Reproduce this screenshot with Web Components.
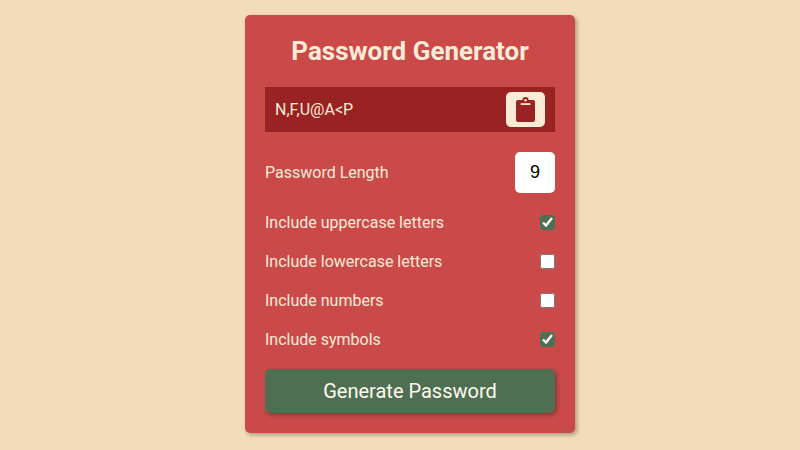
<!DOCTYPE html>
<html lang="en">
<head>
<meta charset="utf-8">
<title>Password Generator</title>
<style>
html,body{height:100%}
body{margin:0;background:#f2dcba;font-family:Roboto,"Liberation Sans",sans-serif;font-size:16px;color:#faebd7;display:flex;justify-content:center;align-items:flex-start;box-sizing:border-box;padding:15px 0 0 20px;overflow:hidden}
</style>
</head>
<body>
<password-card>
  <span slot="title">Password Generator</span>
  <password-result value="N,F,U@A&lt;P"></password-result>
  <length-field value="9">Password Length</length-field>
  <option-list>
    <option-row checked>Include uppercase letters</option-row>
    <option-row>Include lowercase letters</option-row>
    <option-row>Include numbers</option-row>
    <option-row checked>Include symbols</option-row>
  </option-list>
  <generate-button>Generate Password</generate-button>
</password-card>
<script>
function define(name, html, setup) {
  customElements.define(name, class extends HTMLElement {
    constructor() {
      super();
      const t = document.createElement('template');
      t.innerHTML = html;
      this.attachShadow({mode: 'open'}).append(t.content.cloneNode(true));
    }
    connectedCallback() { if (setup) setup(this, this.shadowRoot); }
  });
}

define('password-card', `<style>
:host{display:flex;flex-direction:column;box-sizing:border-box;width:330px;height:418px;padding:20px;border-radius:5px;background:#ca4a4a;box-shadow:2px 2px 4px rgba(0,0,0,.3)}
h2{margin:0 0 20px;font-size:26px;line-height:32px;font-weight:700;text-align:center}
</style><h2><slot name="title"></slot></h2><slot></slot>`);

define('password-result', `<style>
:host{display:flex;align-items:center;justify-content:space-between;box-sizing:border-box;height:45px;padding:0 10px;background:#992222}
button{display:flex;align-items:center;justify-content:center;width:39px;height:35px;padding:0;border:0;border-radius:5px;background:#faebd7;color:#992222}
svg{display:block}
</style><span></span><button aria-label="Copy">
<svg width="19" height="25" viewBox="0 0 19 25"><rect y="3" width="19" height="22" rx="2" fill="currentColor"/><circle cx="9.500" cy="3" r="3" fill="currentColor"/><circle cx="9.500" cy="3.300" r="1.200" fill="#faebd7"/><rect x="4.700" y="6.200" width="9.700" height="1.800" fill="#faebd7"/></svg></button>`,
(el, root) => { root.querySelector('span').textContent = el.getAttribute('value'); });

define('length-field', `<style>
:host{display:flex;align-items:center;justify-content:space-between;margin-top:20px;height:41px}
input{box-sizing:border-box;width:40px;height:41px;padding:0;border:0;border-radius:5px;background:#fff;color:#000;font:18px "Liberation Sans",Arial,sans-serif;text-align:center}
</style><label><slot></slot></label><input type="text">`,
(el, root) => { root.querySelector('input').value = el.getAttribute('value'); });

define('option-list', `<style>:host{display:flex;flex-direction:column;gap:20px;margin-top:20px}</style><slot></slot>`);

define('option-row', `<style>
:host{display:flex;align-items:center;justify-content:space-between;height:19px}
input{width:15px;height:15px;margin:0;accent-color:#4f6f52}
</style><label><slot></slot></label><input type="checkbox">`,
(el, root) => { root.querySelector('input').checked = el.hasAttribute('checked'); });

define('generate-button', `<style>
:host{display:block;margin-top:20px}
button{display:block;width:100%;height:44px;padding:0;border:0;border-radius:5px;background:#4f6f52;color:#fffaf0;font:20px Roboto,sans-serif;box-shadow:2px 2px 4px rgba(0,0,0,.3)}
</style><button><slot></slot></button>`);
</script>
</body>
</html>
